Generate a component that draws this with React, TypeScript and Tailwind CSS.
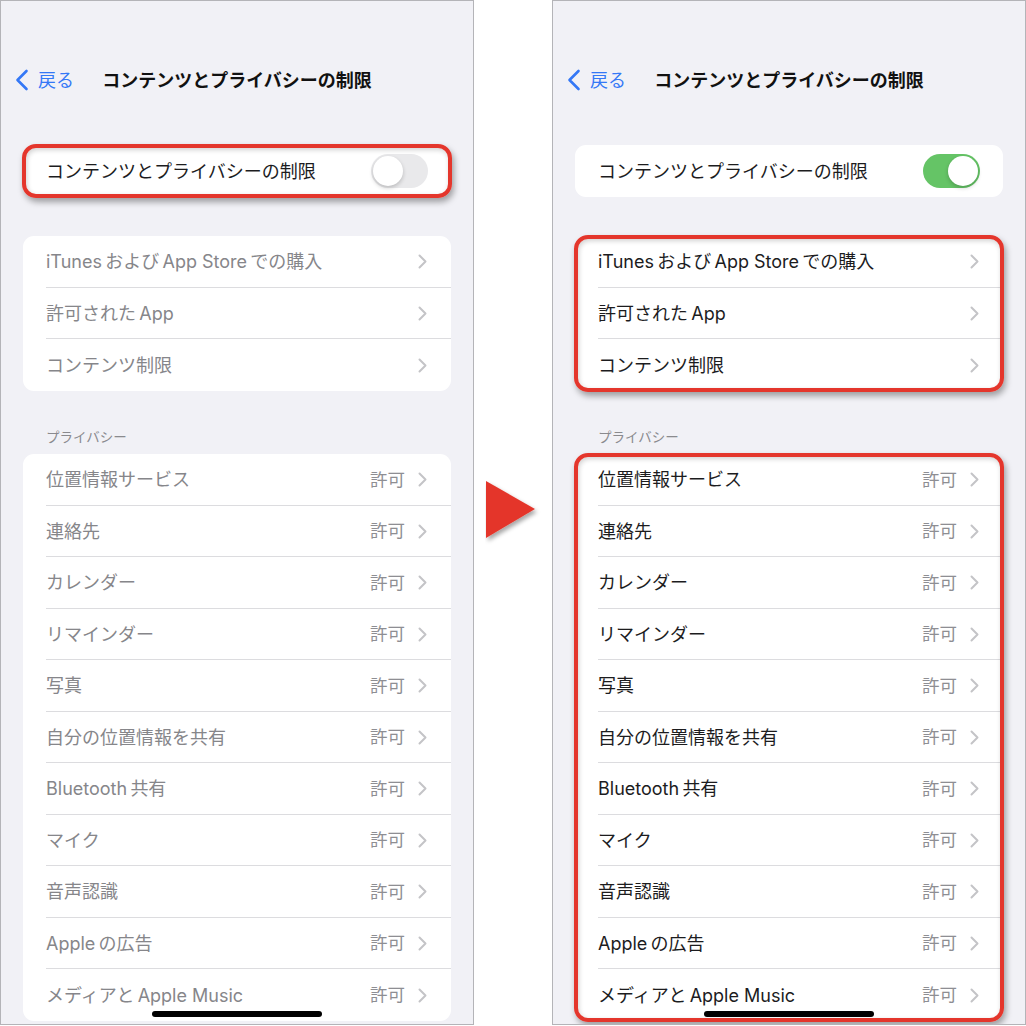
import React from "react";

const font = { fontFamily: 'Inter, "Noto Sans CJK JP", sans-serif' };

const privacyRows = [
  "位置情報サービス",
  "連絡先",
  "カレンダー",
  "リマインダー",
  "写真",
  "自分の位置情報を共有",
  "Bluetooth\u2009共有",
  "マイク",
  "音声認識",
  "Apple\u2009の広告",
  "メディアと\u2009Apple Music",
];

const topRows = ["iTunes\u2009および\u2009App Store\u2009での購入", "許可された\u2009App", "コンテンツ制限"];

const Chevron = () => (
  <svg width="9" height="15" viewBox="0 0 9 15" className="shrink-0">
    <polyline points="1.5,1.5 7.5,7.5 1.5,13.5" fill="none" stroke="#c4c4c7" strokeWidth="2" strokeLinecap="round" strokeLinejoin="round" />
  </svg>
);

const Outline = () => (
  <div className="pointer-events-none absolute -inset-[1px] rounded-[14px] border-[4px] border-[#e4362c] shadow-[2px_4px_6px_rgba(0,0,0,0.35),inset_1px_2px_5px_rgba(0,0,0,0.18)]" />
);

const Toggle = ({ on }: { on: boolean }) => (
  <div
    className={
      on
        ? "relative h-[34px] w-[57px] rounded-full bg-[#65c466]"
        : "relative h-[34px] w-[57px] rounded-full bg-[#e9e9eb]"
    }
  >
    <div
      className={
        on
          ? "absolute right-[2px] top-[2px] h-[30px] w-[30px] rounded-full bg-white shadow-[0_2px_4px_rgba(0,0,0,0.2)]"
          : "absolute left-[2px] top-[2px] h-[30px] w-[30px] rounded-full bg-white shadow-[0_2px_4px_rgba(0,0,0,0.2)]"
      }
    />
  </div>
);

const Row = ({ label, value, last, dim }: { label: string; value?: string; last: boolean; dim: boolean }) => (
  <div className="flex h-[51.5px] items-stretch pl-[23px]">
    <div
      className={
        last
          ? "flex flex-1 items-center pr-[24px] pt-[1px]"
          : "flex flex-1 items-center border-b border-[#dcdcdf] pr-[24px] pt-[1px]"
      }
    >
      <span className={dim ? "text-[18px] text-[#86868a]" : "text-[18px] text-[#1c1c1e]"}>{label}</span>
      {value && <span className="ml-auto text-[17.5px] text-[#8e8e93]">{value}</span>}
      <span className={value ? "ml-[13px]" : "ml-auto"}>
        <Chevron />
      </span>
    </div>
  </div>
);

const Phone = ({ enabled }: { enabled: boolean }) => {
  const dim = !enabled;
  return (
    <div className="relative flex h-[1025px] w-[474px] flex-col overflow-hidden border border-[#b4b4b8] bg-[#f1f1f6] pt-[57px]" style={font}>
      <div className="grid h-[44px] grid-cols-[1fr_auto_1fr] items-center">
        <div className="flex items-center pl-[14px]">
          <svg width="14" height="22" viewBox="0 0 14 22">
            <polyline points="11.5,2 2.5,11 11.5,20" fill="none" stroke="#3478f6" strokeWidth="2.6" strokeLinecap="round" strokeLinejoin="round" />
          </svg>
          <span className="ml-[9px] text-[18px] text-[#3478f6]">戻る</span>
        </div>
        <div className="text-[18px] font-bold text-[#111]">コンテンツとプライバシーの制限</div>
        <div />
      </div>

      <div className="relative mx-[22px] mt-[43px]">
        <div className="flex h-[52px] items-center justify-between rounded-[11px] bg-white px-[23px]">
          <span className="text-[18px] text-[#1c1c1e]">コンテンツとプライバシーの制限</span>
          <Toggle on={enabled} />
        </div>
        {dim && <Outline />}
      </div>

      <div className="relative mx-[22px] mt-[39px]">
        <div className="overflow-hidden rounded-[11px] bg-white">
          {topRows.map((r, i) => (
            <Row key={r} label={r} last={i === topRows.length - 1} dim={dim} />
          ))}
        </div>
        {enabled && <Outline />}
      </div>

      <div className="flex h-[63.5px] items-end pb-[8px] pl-[45px] text-[13.5px] leading-[18px] text-[#8a8a8e]">プライバシー</div>

      <div className="relative mx-[22px]">
        <div className="overflow-hidden rounded-[11px] bg-white">
          {privacyRows.map((r, i) => (
            <Row key={r} label={r} value="許可" last={i === privacyRows.length - 1} dim={dim} />
          ))}
        </div>
        {enabled && <Outline />}
      </div>

      <div className="absolute bottom-[7px] left-1/2 h-[6px] w-[170px] -translate-x-1/2 rounded-full bg-black" />
    </div>
  );
};

export default function App() {
  return (
    <div className="flex h-[1026px] w-[1026px] bg-white">
      <Phone enabled={false} />
      <div className="flex w-[78px] items-center justify-center">
        <svg width="56" height="66" viewBox="0 0 56 66">
          <defs>
            <filter id="tri" x="-20%" y="-20%" width="150%" height="150%">
              <feDropShadow dx="2" dy="3" stdDeviation="2" floodColor="#000" floodOpacity="0.35" />
            </filter>
          </defs>
          <polygon points="1,1 50,29 1,58" fill="#e4362c" filter="url(#tri)" />
        </svg>
      </div>
      <Phone enabled={true} />
    </div>
  );
}
